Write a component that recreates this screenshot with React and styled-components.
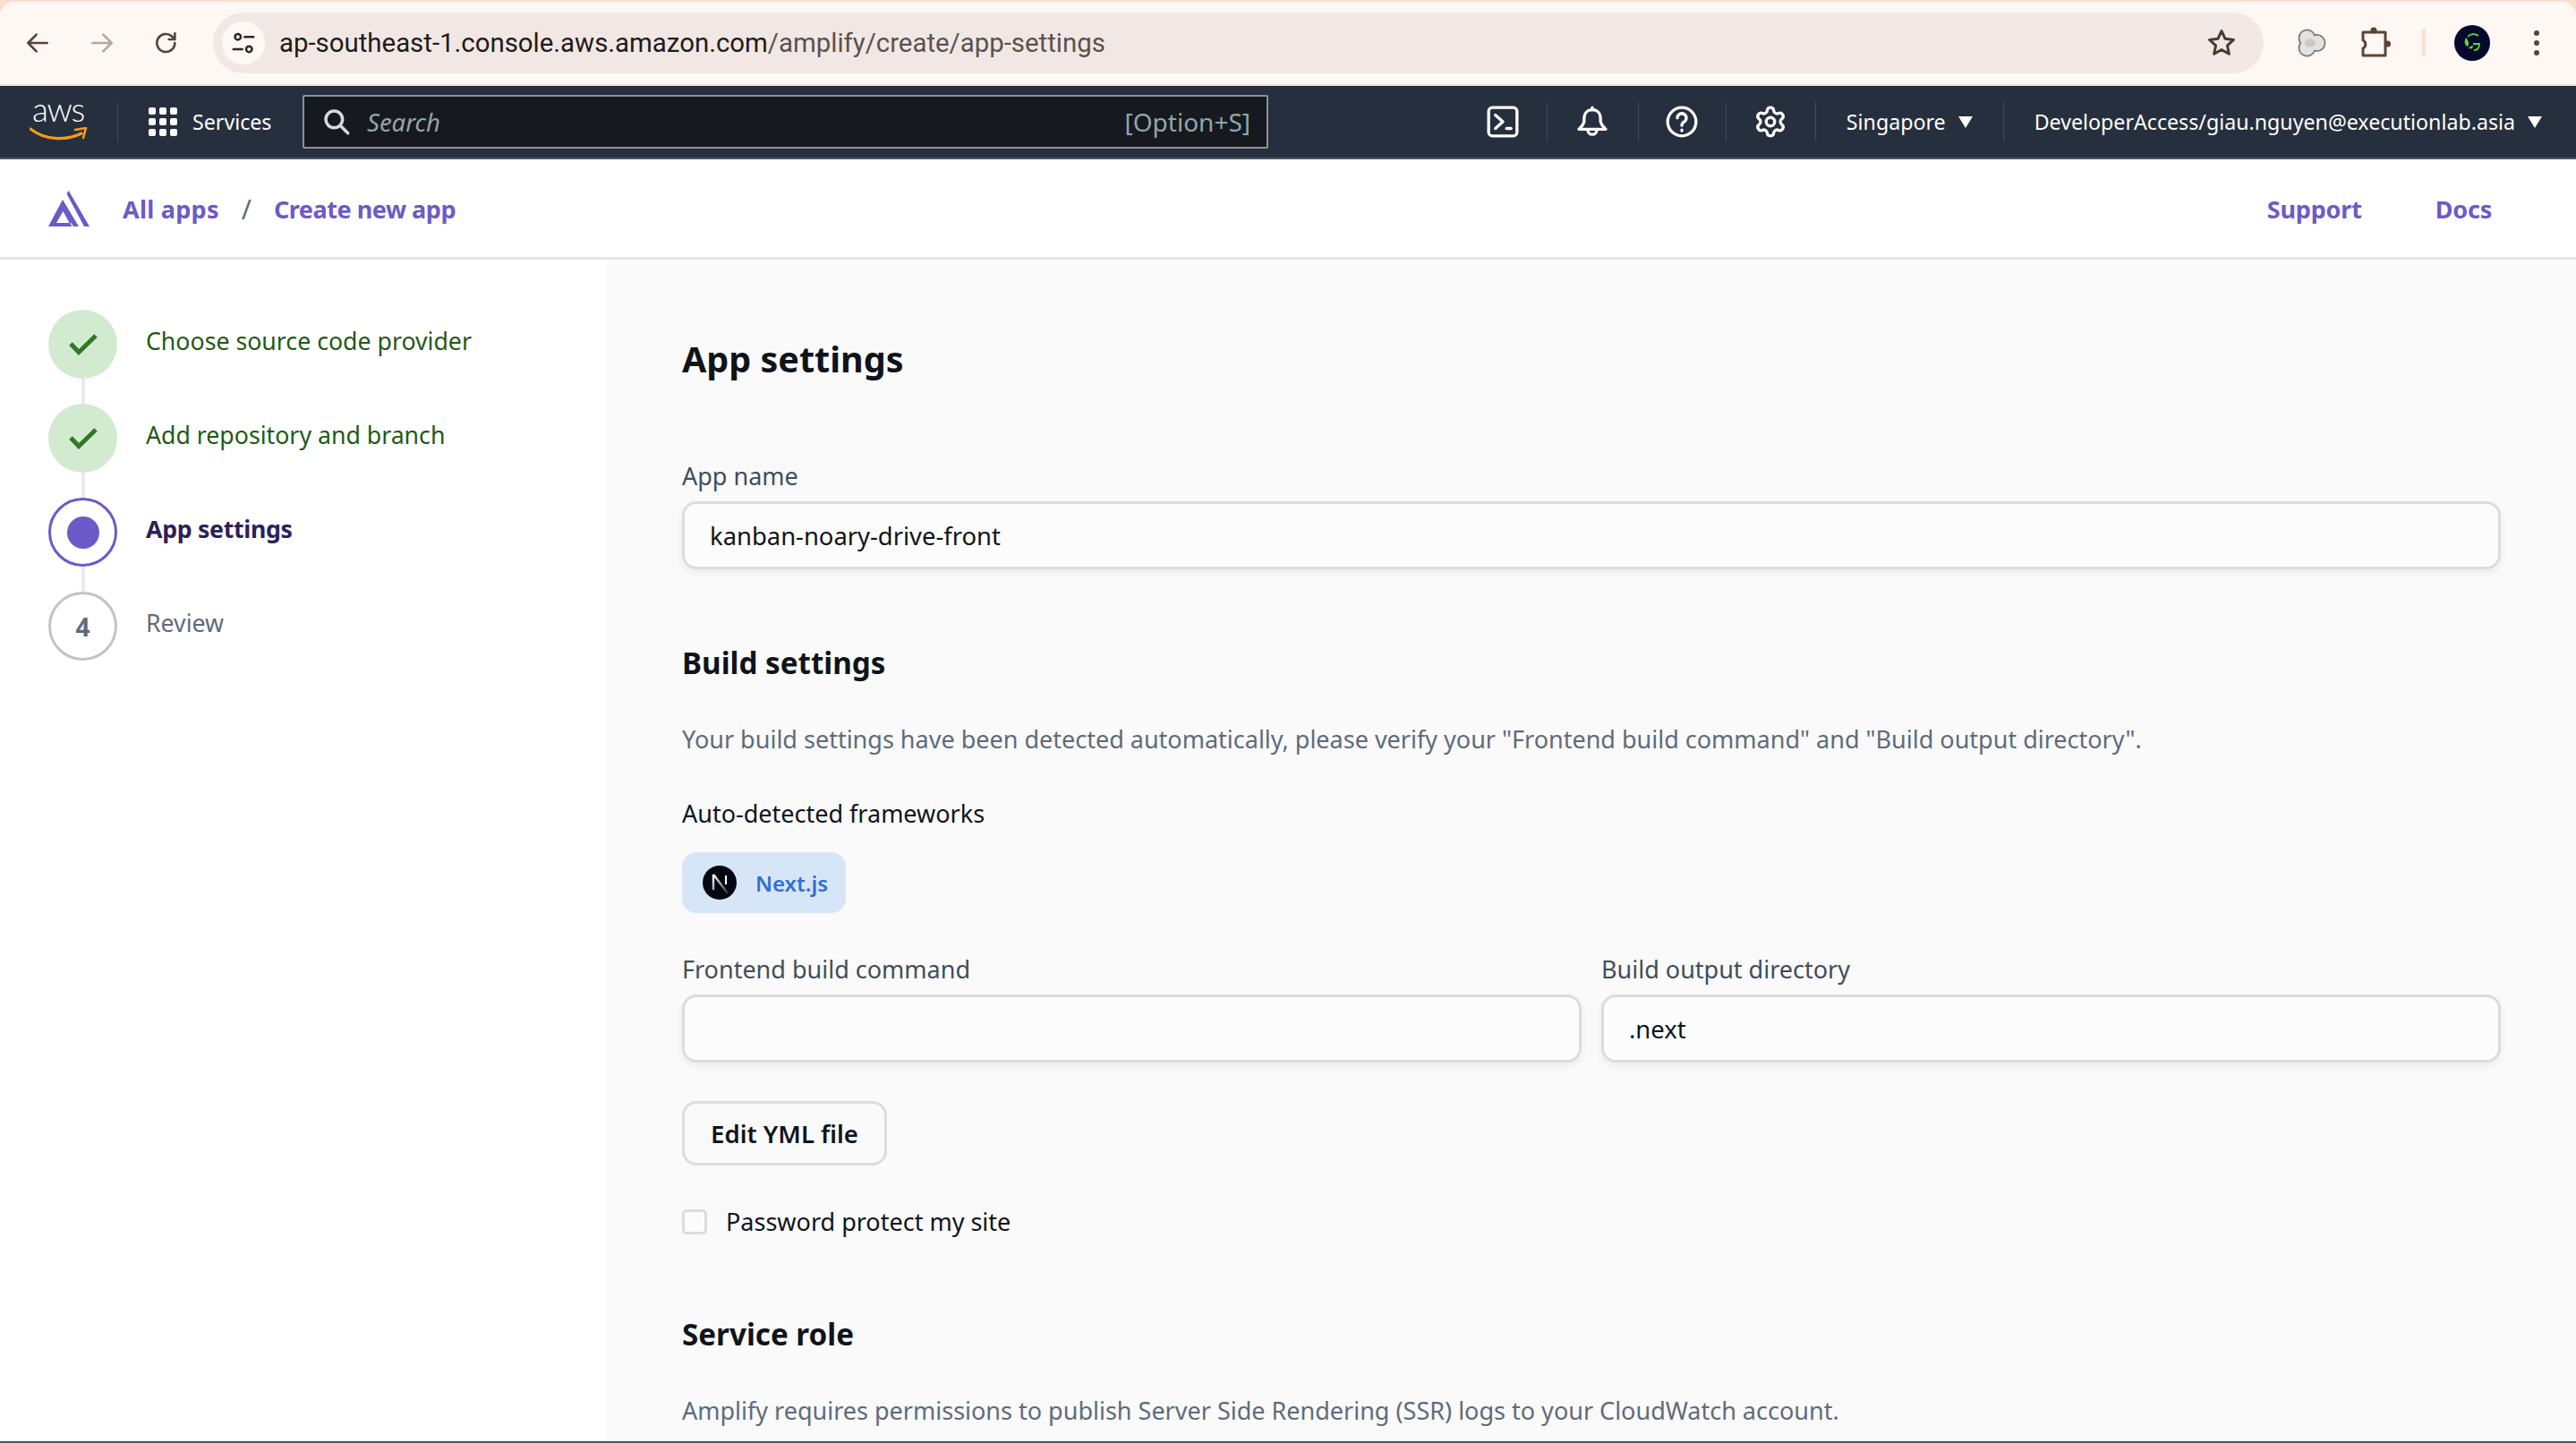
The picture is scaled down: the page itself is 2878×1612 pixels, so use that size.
import React from 'react'
import styled, { createGlobalStyle } from 'styled-components'
import { Settings } from 'lucide-react'

const GlobalStyle = createGlobalStyle`
  html, body { margin: 0; padding: 0; background: #fff; }
  * { box-sizing: border-box; }
  body { font-family: "Noto Sans", "Open Sans", sans-serif; }
`

const steps = [
  { label: 'Choose source code provider', state: 'done' },
  { label: 'Add repository and branch', state: 'done' },
  { label: 'App settings', state: 'current' },
  { label: 'Review', state: 'todo', num: 4 },
]

const Icon = ({ children, size = 32, vb = 24, sw = 2, color = 'currentColor' }) => (
  <svg width={size} height={size} viewBox={`0 0 ${vb} ${vb}`} fill="none" stroke={color} strokeWidth={sw} strokeLinecap="round" strokeLinejoin="round">
    {children}
  </svg>
)

function AwsLogo() {
  return (
    <LogoStack>
      <AwsWord>aws</AwsWord>
      <svg width="66" height="16" viewBox="0 0 66 16">
        <path d="M1 2 C16 14 40 16 58 7" fill="none" stroke="#f29b1d" strokeWidth="3.2" strokeLinecap="round" />
        <path d="M51 3 L63 1 L60 12" fill="none" stroke="#f29b1d" strokeWidth="2.6" strokeLinejoin="round" strokeLinecap="round" />
      </svg>
    </LogoStack>
  )
}

function AmplifyLogo() {
  return (
    <svg width="46" height="40" viewBox="0 0 46 40">
      <path fill="#6c5ac8" fillRule="evenodd" d="M0 40 L16 10 L34 40 L28 40 L26 36.500 L23.500 36 L16.500 23 L9 36 L24 36 L26.500 40 Z" />
      <path fill="#6c5ac8" d="M22.700 0 L46 40 L40 40 L20.500 3.500 Z" />
    </svg>
  )
}

export default function App() {
  return (
    <Page>
      <GlobalStyle />
      <BrowserBar>
        <ToolBar>
          <BrowserIcon>
            <Icon color="#5a4338"><path d="M20 12H5M11 5l-7 7 7 7" /></Icon>
          </BrowserIcon>
          <BrowserIcon>
            <Icon color="#b3a9a3"><path d="M4 12h15M13 5l7 7-7 7" /></Icon>
          </BrowserIcon>
          <BrowserIcon>
            <Icon color="#5a4338"><path d="M19 12a7.500 7.500 0 1 1-2.400-5.500L19 9M19 4v5h-5" /></Icon>
          </BrowserIcon>
          <UrlBar>
            <SiteBadge>
              <Icon size={30} color="#33261f" sw={2}>
                <circle cx="7" cy="6.500" r="2.600" />
                <path d="M13 6.500h8M3 17.500h8" />
                <circle cx="17" cy="17.500" r="2.600" />
              </Icon>
            </SiteBadge>
            <UrlText>
              ap-southeast-1.console.aws.amazon.com<UrlPath>/amplify/create/app-settings</UrlPath>
            </UrlText>
            <StarWrap>
              <Icon size={36} color="#4c3a31" sw={2}>
                <path d="M12 3l2.700 5.900 6.300.7-4.700 4.300 1.300 6.300L12 17l-5.600 3.200 1.300-6.300L3 9.600l6.300-.7z" />
              </Icon>
            </StarWrap>
          </UrlBar>
          <ExtArea>
            <svg width="32" height="32" viewBox="0 0 32 32">
              <g fill="#e2e2e0" stroke="#7d7b79" strokeWidth="2">
                <circle cx="10.500" cy="10.500" r="9" />
                <circle cx="10.500" cy="21.500" r="9" />
                <circle cx="21.500" cy="16" r="9" />
              </g>
              <circle cx="10.500" cy="10.500" r="8" fill="#e2e2e0" />
              <circle cx="10.500" cy="21.500" r="8" fill="#e2e2e0" />
              <circle cx="21.500" cy="16" r="8" fill="#e2e2e0" />
              <ellipse cx="14" cy="16" rx="6" ry="4.500" fill="#cbcac8" />
            </svg>
            <svg width="34" height="36" viewBox="0 0 34 36">
              <path d="M2 6 H27 V32 H2 V24 a5 5 0 0 0 0 -9 Z" fill="none" stroke="#5a4338" strokeWidth="3" strokeLinejoin="round" />
              <circle cx="14" cy="4" r="3.600" fill="#5a4338" />
              <circle cx="29.500" cy="19" r="3.600" fill="#5a4338" />
            </svg>
            <ExtDivider />
            <Avatar>
              <svg width="40" height="40" viewBox="0 0 40 40">
                <circle cx="20" cy="20" r="20" fill="#050a2c" />
                <path d="M27 12a9 9 0 0 0-12 1M21 21h7c0 4-2 7-6 7" fill="none" stroke="#62d63a" strokeWidth="1.800" />
                <path d="M13 14c-2 4-2 8 2 10 2-3 1-7-2-10zM16 26c2-3 4-3 5-3 0 3-2 4-5 3z" fill="#62d63a" />
              </svg>
            </Avatar>
            <Dots>
              <i /><i /><i />
            </Dots>
          </ExtArea>
        </ToolBar>
      </BrowserBar>

      <TopNav>
        <LogoCell><AwsLogo /></LogoCell>
        <NavDivider />
        <ServicesBtn>
          <GridIcon>{Array.from({ length: 9 }).map((_, i) => <b key={i} />)}</GridIcon>
          Services
        </ServicesBtn>
        <SearchBox>
          <Icon size={32} color="#d5dbdb" sw={2.600}>
            <circle cx="10" cy="10" r="7" />
            <path d="M15.500 15.500l6 6" />
          </Icon>
          <SearchHint>Search</SearchHint>
          <Shortcut>[Option+S]</Shortcut>
        </SearchBox>
        <NavRight>
          <NavIcon $w={98}>
            <Icon size={40} color="#fff" sw={2}>
              <rect x="2.500" y="2.500" width="19" height="19" rx="2.500" />
              <path d="M7 7.500l5 4.500-5 4.500" />
              <path d="M14.500 16.500h3" />
            </Icon>
          </NavIcon>
          <NavDivider />
          <NavIcon $w={101}>
            <Icon size={40} color="#fff" sw={2}>
              <path d="M12 2.500v1.500" />
              <path d="M12 4c-3.500 0-5.500 2.500-5.500 6v1.500c0 2-1.500 3.500-3.500 5.500h18c-2-2-3.500-3.500-3.500-5.500V10c0-3.500-2-6-5.500-6z" />
              <path d="M9 17.500a3 3 0 0 0 6 0" />
            </Icon>
          </NavIcon>
          <NavDivider />
          <NavIcon $w={97}>
            <Icon size={40} color="#fff" sw={2}>
              <circle cx="12" cy="12" r="9.500" />
              <path d="M9 9.500a3 3 0 1 1 4.500 2.600c-1 .6-1.500 1.200-1.500 2.400" />
              <path d="M12 17.500v.5" />
            </Icon>
          </NavIcon>
          <NavDivider />
          <NavIcon $w={99}>
            <Settings size={38} color="#fff" strokeWidth={2.100} />
          </NavIcon>
          <NavDivider />
          <NavMenu>Singapore<Caret /></NavMenu>
          <NavDivider />
          <NavMenu>DeveloperAccess/giau.nguyen@executionlab.asia<Caret /></NavMenu>
        </NavRight>
      </TopNav>

      <SubHeader>
        <AmplifyLogo />
        <Crumbs>
          <PurpleLink $ls={0.26}>All apps</PurpleLink>
          <Slash>/</Slash>
          <PurpleLink $ls={-0.46}>Create new app</PurpleLink>
        </Crumbs>
        <SubLinks>
          <PurpleLink>Support</PurpleLink>
          <PurpleLink>Docs</PurpleLink>
        </SubLinks>
      </SubHeader>

      <Body>
        <Sidebar>
          {steps.map((s, i) => (
            <React.Fragment key={s.label}>
              {i > 0 && <Connector />}
              <Step>
                <StepCircle $state={s.state}>
                  {s.state === 'done' && (
                    <svg width="34" height="26" viewBox="0 0 34 26">
                      <path d="M3 12 L12 21.500 L31 3" fill="none" stroke="#2f7a23" strokeWidth="5" />
                    </svg>
                  )}
                  {s.state === 'current' && <StepDot />}
                  {s.state === 'todo' && s.num}
                </StepCircle>
                <StepLabel $state={s.state}>{s.label}</StepLabel>
              </Step>
            </React.Fragment>
          ))}
        </Sidebar>
        <Main>
          <PageTitle>App settings</PageTitle>
          <Label>App name</Label>
          <Input readOnly value="kanban-noary-drive-front" />
          <SectionTitle>Build settings</SectionTitle>
          <Hint>Your build settings have been detected automatically, please verify your "Frontend build command" and "Build output directory".</Hint>
          <DarkLabel>Auto-detected frameworks</DarkLabel>
          <Chip>
            <svg width="38" height="38" viewBox="0 0 38 38">
              <defs>
                <linearGradient id="nx" x1="0" y1="0" x2="1" y2="1">
                  <stop offset="0" stopColor="#fff" />
                  <stop offset="1" stopColor="#fff" stopOpacity="0.150" />
                </linearGradient>
              </defs>
              <circle cx="19" cy="19" r="19" fill="#050810" />
              <path d="M12 27V11h1l15 20" fill="none" stroke="url(#nx)" strokeWidth="2.400" />
              <path d="M26 11v10" stroke="#fff" strokeWidth="2" />
            </svg>
            Next.js
          </Chip>
          <TwoCols>
            <Field>
              <Label>Frontend build command</Label>
              <Input readOnly value="" />
            </Field>
            <Field>
              <Label>Build output directory</Label>
              <Input readOnly value=".next" />
            </Field>
          </TwoCols>
          <EditBtn>Edit YML file</EditBtn>
          <CheckRow>
            <CheckBox />
            Password protect my site
          </CheckRow>
          <ServiceTitle>Service role</ServiceTitle>
          <HintLast>Amplify requires permissions to publish Server Side Rendering (SSR) logs to your CloudWatch account.</HintLast>
        </Main>
      </Body>
    </Page>
  )
}

const Page = styled.div`
  width: 2878px;
  height: 1612px;
  display: flex;
  flex-direction: column;
  overflow: hidden;
  border-bottom: 2px solid #4b5058;
  font-family: "Noto Sans", "Open Sans", sans-serif;
`
const BrowserBar = styled.div`
  height: 96px;
  background: #fbdfcf;
  padding-top: 2px;
  flex-shrink: 0;
`
const ToolBar = styled.div`
  height: 92px;
  background: #fef8f4;
  border-radius: 16px 16px 0 0;
  display: flex;
  align-items: center;
  padding-left: 6px;
`
const BrowserIcon = styled.div`
  width: 72px;
  display: flex;
  justify-content: center;
`
const UrlBar = styled.div`
  margin-left: 16px;
  width: 2291px;
  height: 68px;
  border-radius: 34px;
  background: #f1e8e5;
  display: flex;
  align-items: center;
  padding: 0 29px 0 10px;
`
const SiteBadge = styled.div`
  width: 48px;
  height: 48px;
  border-radius: 50%;
  background: #fef8f4;
  display: flex;
  align-items: center;
  justify-content: center;
`
const UrlText = styled.div`
  margin-left: 16px;
  font-family: Roboto, sans-serif;
  font-size: 29.400px;
  color: #241a15;
`
const UrlPath = styled.span`
  color: #5c514c;
`
const StarWrap = styled.div`
  margin-left: auto;
  display: flex;
`
const ExtArea = styled.div`
  display: grid;
  grid-template-columns: 73px 72px 34px 74px 70px;
  justify-items: center;
  align-items: center;
  margin-left: 17px;
`
const ExtDivider = styled.div`
  width: 4px;
  height: 32px;
  border-radius: 2px;
  background: #fadfd0;
`
const Avatar = styled.div`
  display: flex;
`
const Dots = styled.div`
  display: flex;
  flex-direction: column;
  gap: 5px;
  i {
    display: block;
    width: 6px;
    height: 6px;
    border-radius: 50%;
    background: #5a4338;
  }
`
const TopNav = styled.div`
  height: 82px;
  flex-shrink: 0;
  background: #252f3e;
  border-bottom: 2px solid #4b5460;
  display: flex;
  align-items: center;
  color: #fff;
`
const LogoCell = styled.div`
  width: 131px;
  padding-left: 33px;
  display: flex;
`
const LogoStack = styled.div`
  display: flex;
  flex-direction: column;
  align-items: flex-start;
`
const AwsWord = styled.span`
  display: block;
  font-family: Lato, "Noto Sans", sans-serif;
  font-size: 37px;
  font-weight: 300;
  line-height: 16px;
  margin-bottom: 12px;
  letter-spacing: -1.300px;
  color: #fff;
  padding-left: 3px;
`
const NavDivider = styled.div`
  width: 1px;
  height: 44px;
  background: #414d5c;
  flex-shrink: 0;
`
const ServicesBtn = styled.div`
  display: flex;
  align-items: center;
  gap: 17px;
  margin-left: 34px;
  width: 172px;
  font-size: 23.200px;
`
const GridIcon = styled.div`
  display: grid;
  grid-template-columns: repeat(3, 8px);
  grid-auto-rows: 8px;
  gap: 4px;
  b {
    display: block;
    background: #fff;
    border-radius: 2px;
  }
`
const SearchBox = styled.div`
  width: 1079px;
  height: 60px;
  background: #16191f;
  border: 2px solid #879596;
  border-radius: 2px;
  display: flex;
  align-items: center;
  padding: 0 18px 0 20px;
  color: #d5dbdb;
`
const SearchHint = styled.span`
  margin-left: 18px;
  font-style: italic;
  font-size: 27.500px;
  color: #95a5a6;
`
const Shortcut = styled.span`
  margin-left: auto;
  font-size: 28px;
  color: #95a5a6;
`
const NavRight = styled.div`
  margin-left: auto;
  display: flex;
  align-items: center;
  padding-right: 38px;
`
const NavIcon = styled.div`
  width: ${p => p.$w}px;
  display: flex;
  justify-content: center;
`
const NavMenu = styled.div`
  display: flex;
  align-items: center;
  gap: 14px;
  padding: 0 34px;
  font-size: 23.200px;
  &:last-child { padding-right: 0; }
`
const Caret = styled.span`
  width: 0;
  height: 0;
  border-left: 8px solid transparent;
  border-right: 8px solid transparent;
  border-top: 13px solid #fff;
`
const SubHeader = styled.div`
  height: 112px;
  flex-shrink: 0;
  background: #fff;
  border-bottom: 3px solid #e4e5e9;
  display: flex;
  align-items: center;
  padding: 1px 94px 0 54px;
`
const Crumbs = styled.div`
  display: flex;
  align-items: center;
  margin-left: 37px;
  gap: 25px;
`
const PurpleLink = styled.a`
  font-size: 27px;
  font-weight: 700;
  letter-spacing: ${p => p.$ls ?? -0.2}px;
  color: #6c5ac8;
`
const Slash = styled.span`
  font-size: 30px;
  color: #5f6b7a;
`
const SubLinks = styled.div`
  margin-left: auto;
  display: flex;
  gap: 82px;
`
const Body = styled.div`
  flex: 1;
  display: flex;
  min-height: 0;
`
const Sidebar = styled.div`
  width: 678px;
  flex-shrink: 0;
  background: #fff;
  padding: 56px 0 0 54px;
  display: flex;
  flex-direction: column;
`
const Step = styled.div`
  display: flex;
  align-items: center;
  gap: 32px;
`
const Connector = styled.div`
  width: 4px;
  height: 28px;
  margin-left: 37px;
  background: #e9ebed;
`
const StepCircle = styled.div`
  width: 77px;
  height: 77px;
  border-radius: 50%;
  flex-shrink: 0;
  display: flex;
  align-items: center;
  justify-content: center;
  font-size: 28px;
  font-weight: 700;
  color: #5f6b7a;
  background: ${p => (p.$state === 'done' ? '#d2ead0' : '#fff')};
  border: ${p => (p.$state === 'current' ? '3px solid #6c5ac8' : p.$state === 'todo' ? '3px solid #c0c4ca' : 'none')};
`
const StepDot = styled.div`
  width: 36px;
  height: 36px;
  border-radius: 50%;
  background: #6c5ac8;
`
const StepLabel = styled.div`
  font-size: 26.700px;
  margin-top: -8px;
  font-weight: ${p => (p.$state === 'current' ? 700 : 400)};
  letter-spacing: ${p => (p.$state === 'current' ? '-0.300px' : '0')};
  color: ${p => (p.$state === 'done' ? '#1f5a14' : p.$state === 'current' ? '#2b2159' : '#5f6b7a')};
`
const Main = styled.div`
  flex: 1;
  background: #fafafa;
  padding: 84px 84px 0;
  min-width: 0;
`
const PageTitle = styled.h1`
  margin: 0 0 86px;
  font-size: 39.500px;
  line-height: 54px;
  font-weight: 700;
  color: #0f141a;
`
const Label = styled.div`
  font-size: 27px;
  line-height: 36px;
  color: #414d5c;
  margin-bottom: 10px;
`
const DarkLabel = styled(Label)`
  color: #0f141a;
  margin: 47px 0 25px;
`
const Input = styled.input`
  display: block;
  width: 100%;
  height: 76px;
  background: #fcfcfc;
  border: 3px solid #dcdcde;
  border-radius: 16px;
  box-shadow: 0 4px 10px rgba(0, 0, 0, 0.060);
  padding: 0 28px;
  font-family: inherit;
  font-size: 27.400px;
  color: #0f141a;
  outline: none;
`
const SectionTitle = styled.h2`
  margin: 82px 0 0;
  font-size: 33.200px;
  line-height: 46px;
  font-weight: 700;
  color: #0f141a;
`
const Hint = styled.p`
  margin: 44px 0 0;
  font-size: 27px;
  line-height: 36px;
  color: #5f6b7a;
`
const Chip = styled.div`
  display: flex;
  width: fit-content;
  align-items: center;
  gap: 21px;
  height: 68px;
  padding: 0 20px 0 23px;
  background: #d7e6f7;
  border-radius: 16px;
  font-size: 24px;
  font-weight: 600;
  color: #2e6fd8;
`
const TwoCols = styled.div`
  display: grid;
  grid-template-columns: 1fr 1fr;
  gap: 22px;
  margin-top: 45px;
`
const Field = styled.div`
  min-width: 0;
`
const EditBtn = styled.button`
  display: block;
  margin-top: 43px;
  width: 229px;
  height: 72px;
  background: transparent;
  border: 3px solid #dcdcde;
  border-radius: 16px;
  font-family: inherit;
  font-size: 27.500px;
  font-weight: 600;
  color: #0f141a;
`
const CheckRow = styled.div`
  display: flex;
  align-items: center;
  gap: 21px;
  margin-top: 45px;
  font-size: 27px;
  line-height: 36px;
  color: #0f141a;
`
const CheckBox = styled.div`
  width: 28px;
  height: 28px;
  background: #fcfcfc;
  border: 3px solid #dcdcde;
  border-radius: 5px;
`
const ServiceTitle = styled(SectionTitle)`
  margin-top: 85px;
`
const HintLast = styled(Hint)`
  margin-top: 44px;
`
